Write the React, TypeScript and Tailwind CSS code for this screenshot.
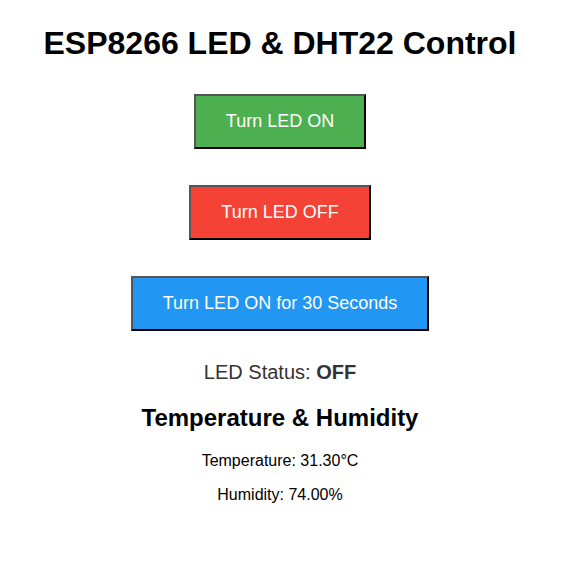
import { useState } from 'react';

const btnBase =
  'px-[30px] py-[15px] text-[18px] leading-[21px] text-white border-2 border-t-[#555555] border-l-[#555555] border-r-black border-b-black cursor-pointer';

export default function App() {
  const [ledOn, setLedOn] = useState(false);

  return (
    <div className="min-h-screen w-[560px] bg-white flex flex-col items-center text-center font-['Liberation_Sans',Arial,sans-serif]">
      <h1 className="mt-[25px] text-[32px] leading-[37px] font-bold text-black">ESP8266 LED &amp; DHT22 Control</h1>

      <button onClick={() => setLedOn(true)} className={`${btnBase} mt-[32px] bg-[#4caf50]`}>
        Turn LED ON
      </button>
      <button onClick={() => setLedOn(false)} className={`${btnBase} mt-[36px] bg-[#f44336]`}>
        Turn LED OFF
      </button>
      <button onClick={() => setLedOn(true)} className={`${btnBase} mt-[36px] bg-[#2196f3]`}>
        Turn LED ON for 30 Seconds
      </button>

      <p className="mt-[30px] text-[20px] leading-[23px] text-[#333333]">
        LED Status: <span className="font-bold">{ledOn ? 'ON' : 'OFF'}</span>
      </p>

      <h2 className="mt-[20px] text-[24px] leading-[28px] font-bold text-black">Temperature &amp; Humidity</h2>
      <p className="mt-[20px] text-[16px] leading-[18px] text-black">Temperature: 31.30°C</p>
      <p className="mt-[16px] text-[16px] leading-[18px] text-black">Humidity: 74.00%</p>
    </div>
  );
}
